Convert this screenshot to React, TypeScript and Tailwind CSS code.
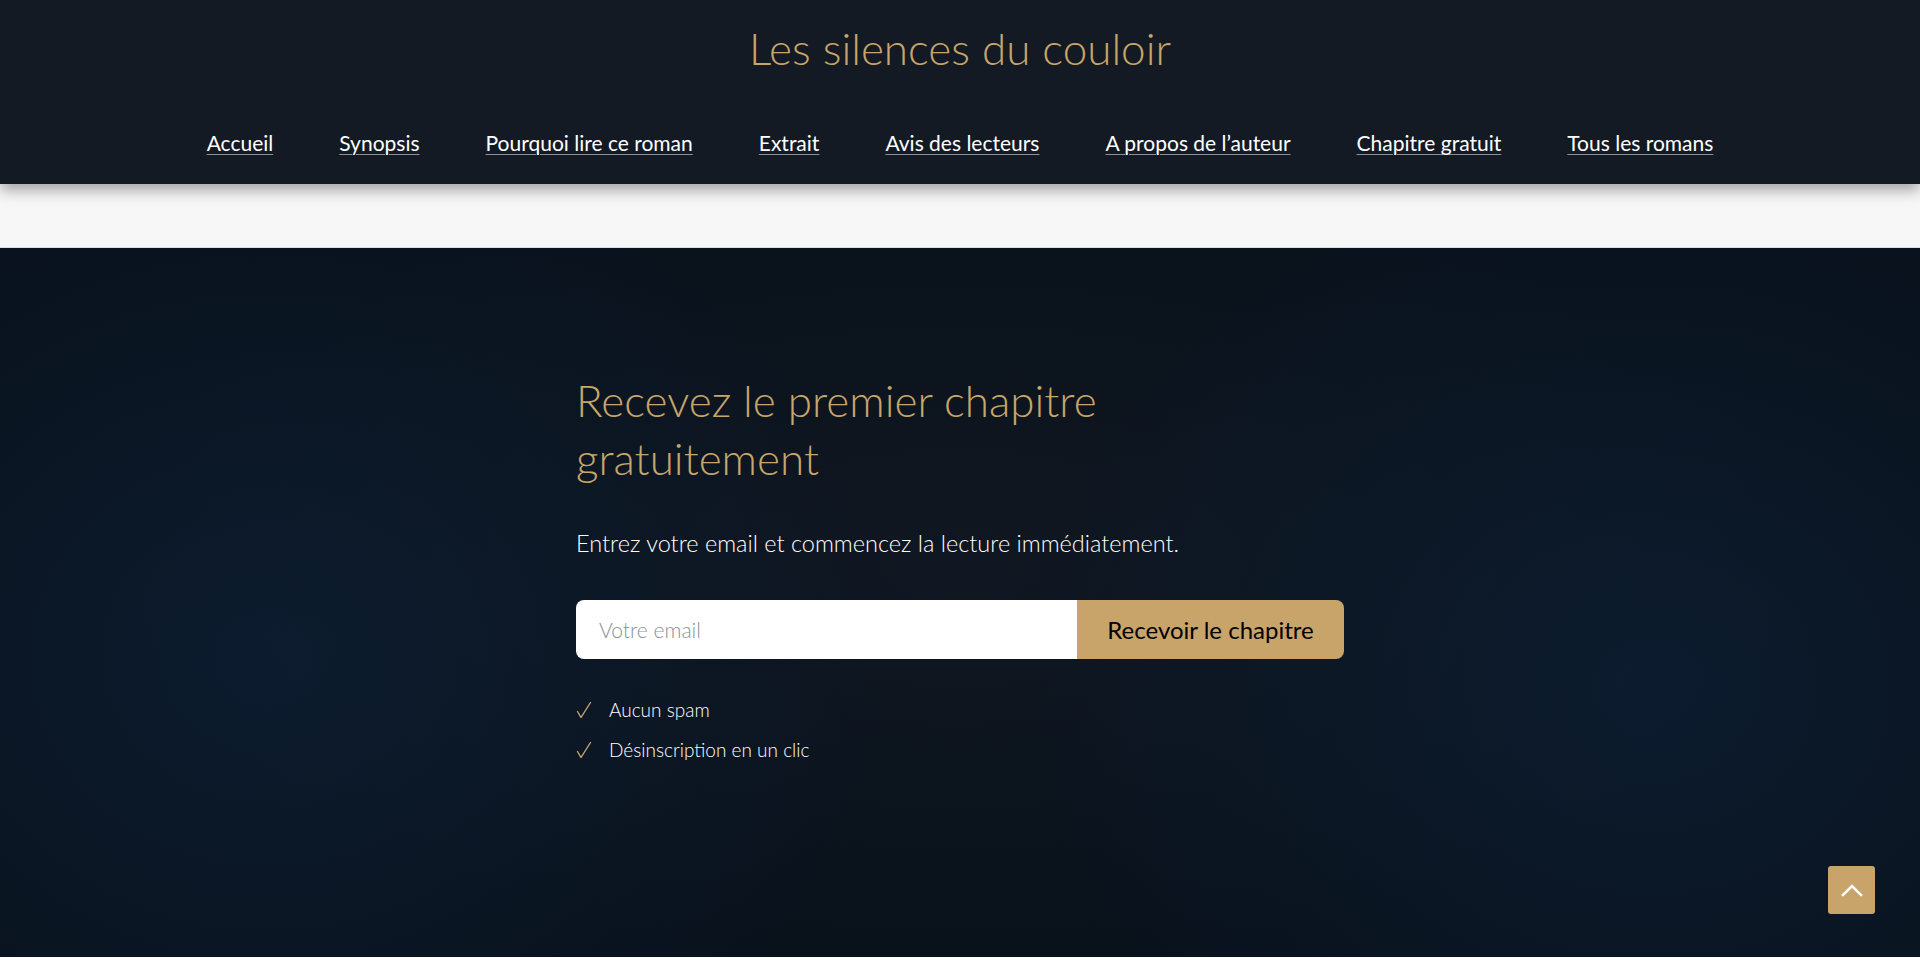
const navItems = [
  'Accueil',
  'Synopsis',
  'Pourquoi lire ce roman',
  'Extrait',
  'Avis des lecteurs',
  'A propos de l’auteur',
  'Chapitre gratuit',
  'Tous les romans',
];

const perks = ['Aucun spam', 'Désinscription en un clic'];

const CheckMark = () => (
  <svg width="16" height="18" viewBox="0 0 16 18" fill="none" className="shrink-0">
    <path d="M1.5 10.5 L5 16.5 L14.5 1.5" stroke="#c8a56a" strokeWidth="1.4" strokeLinecap="round" strokeLinejoin="round" />
  </svg>
);

const Header = () => {
  return (
    <header className="relative z-10 bg-[#131a24] shadow-[0_6px_14px_rgba(0,0,0,0.35)]">
      <h1 className="pt-[20px] text-center text-[44px] leading-[56px] font-light text-[#c8a56a]">
        Les silences du couloir
      </h1>
      <nav className="mt-[52px] pb-[27px] flex justify-center gap-[66px]">
        {navItems.map((item) => (
          <a
            key={item}
            href="#"
            className="text-[21px] leading-[29px] text-white underline decoration-[#8a8f98] underline-offset-[3px] decoration-1"
          >
            {item}
          </a>
        ))}
      </nav>
    </header>
  );
};

const FreeChapter = () => {
  return (
    <section className="min-h-[709px] bg-[#09111b] bg-[radial-gradient(ellipse_32%_75%_at_14%_58%,rgba(13,32,54,0.7),transparent),radial-gradient(ellipse_32%_75%_at_86%_62%,rgba(13,32,54,0.7),transparent),radial-gradient(ellipse_45%_55%_at_50%_45%,rgba(20,27,38,0.6),transparent)] pt-[123px] pb-[120px]">
      <div className="mx-auto w-[768px]">
        <h2 className="text-[44px] leading-[58px] font-light text-[#c8a56a]">
          Recevez le premier chapitre
          <br />
          gratuitement
        </h2>
        <p className="mt-[40px] text-[23.5px] leading-[32px] font-light text-white">
          Entrez votre email et commencez la lecture immédiatement.
        </p>
        <form className="mt-[41px] flex h-[59px] rounded-[8px] overflow-hidden">
          <input
            type="email"
            placeholder="Votre email"
            className="flex-1 bg-white px-[23px] text-[21px] font-light text-gray-900 placeholder:text-[#8a8f98] outline-none"
          />
          <button type="button" className="w-[267px] bg-[#c8a46b] text-[24px] text-black">
            Recevoir le chapitre
          </button>
        </form>
        <ul className="mt-[37px] flex flex-col gap-[13px]">
          {perks.map((perk) => (
            <li key={perk} className="flex items-center gap-[17px] text-[19px] leading-[27px] font-light text-white">
              <CheckMark />
              {perk}
            </li>
          ))}
        </ul>
      </div>
    </section>
  );
};

export default function App() {
  return (
    <div className="font-['Lato',sans-serif]">
      <Header />
      <div className="h-[64px] bg-[#f7f7f7] border-b border-[#dcdcdc]" />
      <FreeChapter />
      <button className="fixed right-[45px] bottom-[44px] w-[47px] h-[48px] rounded-[3px] bg-[#c8a46b] flex items-center justify-center">
        <svg width="22" height="14" viewBox="0 0 22 14" fill="none">
          <polyline points="2,12 11,3 20,12" stroke="white" strokeWidth="2.6" strokeLinecap="square" />
        </svg>
      </button>
    </div>
  );
}
